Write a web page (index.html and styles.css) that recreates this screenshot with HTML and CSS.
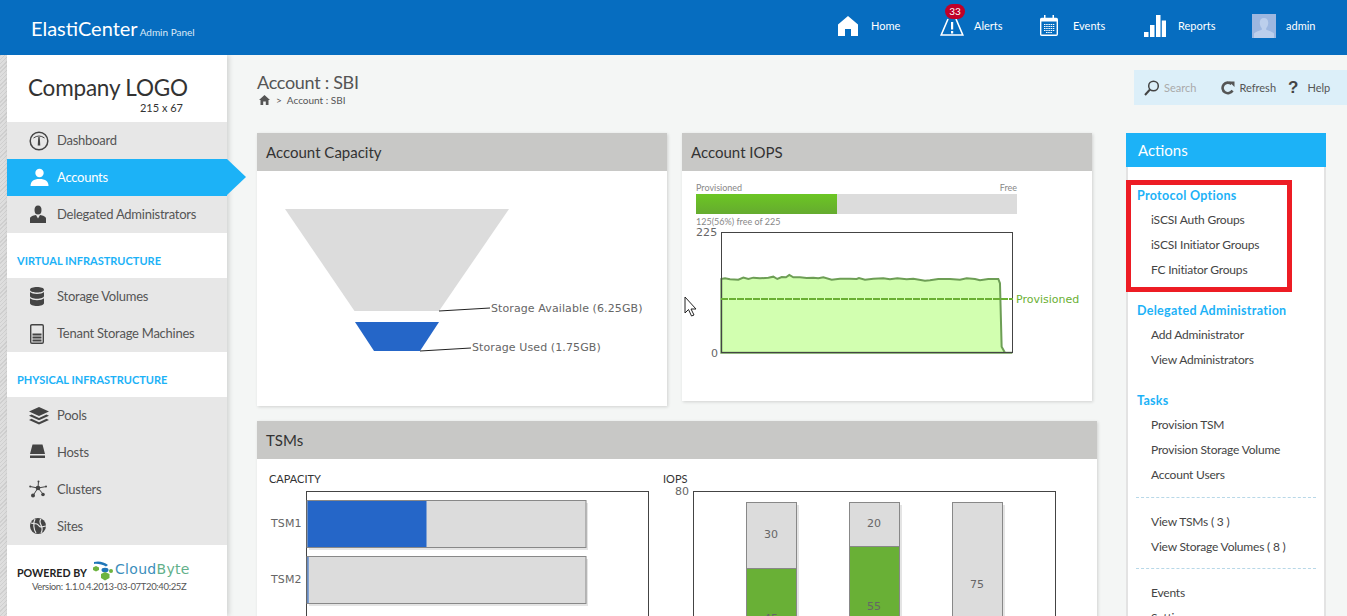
FILE: index.html
```html
<!DOCTYPE html>
<html lang="en">
<head>
    <meta charset="UTF-8">
    <title>ElastiCenter Admin Panel</title>
    <link rel="stylesheet" href="styles.css">
</head>
<body>
    <header class="topbar">
        <div class="brand">ElastiCenter<small>Admin Panel</small></div>
        <nav class="topnav">
            <a class="home-link">
                <svg width="20" height="20" viewBox="0 0 20 20"><path fill="#fff" d="M10 0 20 8.500V20H13V13H7V20H0V8.500Z"/></svg>
                <span>Home</span>
            </a>
            <a class="alerts-link">
                <span class="badge">33</span>
                <svg width="24" height="20" viewBox="0 0 24 20"><path fill="none" stroke="#fff" stroke-width="1.600" d="M8 3 1.200 19H22.800L16 3"/><path fill="#fff" d="M11 6h2.200v7.500H11ZM11 15h2.200v2.600H11Z"/></svg>
                <span>Alerts</span>
            </a>
            <a class="events-link">
                <svg width="18" height="21" viewBox="0 0 18 21"><path fill="none" stroke="#fff" stroke-width="1.400" d="M1.700 3.500H16.300Q17.300 3.500 17.300 4.500V19.300Q17.300 20.300 16.300 20.300H1.700Q.7 20.300 .7 19.300V4.500Q.7 3.500 1.700 3.500Z"/><path fill="#fff" d="M1 3.500H17V6.500H1ZM4 0h1.500v4H4ZM12.500 0H14v4h-1.500Z"/><path stroke="#fff" stroke-width="1.100" stroke-dasharray="1.500 .7" d="M4 9.500h10.500M4 11.500h10.500M4 13.500h10.500M4 15.500h10.500M6 17.500h6.500"/></svg>
                <span>Events</span>
            </a>
            <a class="reports-link">
                <svg width="22" height="22" viewBox="0 0 22 22"><path fill="#fff" d="M0 17h4.500v5H0ZM6 10h4.500v12H6ZM12 0h4.500v22H12ZM17.800 5.500H22V22h-4.200Z"/></svg>
                <span>Reports</span>
            </a>
            <a class="user-link">
                <svg width="24" height="24" viewBox="0 0 24 24"><rect width="24" height="24" fill="#9db7e0"/><path fill="#bccfec" d="M12 4c3 0 4.500 2.400 4.200 5.500-.2 2-1 3.600-2 4.700v1.600c2.500 1 6 1.800 7.800 3.700V24H2v-4.500c1.800-1.900 5.300-2.700 7.800-3.700v-1.600c-1-1.100-1.800-2.700-2-4.700C7.500 6.400 9 4 12 4Z"/></svg>
                <span>admin</span>
            </a>
        </nav>
    </header>

    <div class="layout">
        <div class="hatch"></div>

        <aside class="sidebar">
            <div class="logo">
                <div class="logo-name">Company LOGO</div>
                <div class="logo-size">215 x 67</div>
            </div>
            <ul class="side-menu">
                <li>
                    <svg width="20" height="20" viewBox="0 0 20 20"><circle cx="10" cy="10" r="8.800" fill="none" stroke="#444" stroke-width="1.500"/><path fill="none" stroke="#444" d="M4.500 7Q10 3 15.500 7"/><path fill="#444" d="M9.300 6h1.400l.6 8.500h-2.600Z"/></svg>
                    <span>Dashboard</span>
                </li>
                <li class="active">
                    <svg width="20" height="20" viewBox="0 0 20 20"><circle cx="10.500" cy="5" r="4.200" fill="#fff"/><path fill="#fff" d="M1.500 18c0-4.500 3-7 9-7s9 2.500 9 7Z"/></svg>
                    <span>Accounts</span>
                </li>
                <li>
                    <svg width="20" height="20" viewBox="0 0 20 20"><ellipse cx="9" cy="5" rx="3.500" ry="4.500" fill="#444"/><path fill="#444" d="M1 18v-4.500C1 11.500 4 10.500 7 10l2 3.500L11 10c3 .5 6 1.500 6 3.500V18Z"/></svg>
                    <span>Delegated Administrators</span>
                </li>
            </ul>
            <h3 class="side-heading">VIRTUAL INFRASTRUCTURE</h3>
            <ul class="side-menu">
                <li>
                    <svg width="20" height="20" viewBox="0 0 20 20"><path fill="#444" d="M8 0c3.800 0 7 1 7 2.800S11.800 5.600 8 5.600 1 4.600 1 2.800 4.200 0 8 0ZM1 5c1.200 1.300 4 2 7 2s5.800-.7 7-2v4c0 1.700-3.200 2.700-7 2.700S1 10.700 1 9ZM1 11.200c1.200 1.300 4 2 7 2s5.800-.7 7-2V16c0 1.800-3.200 3-7 3s-7-1.200-7-3Z"/></svg>
                    <span>Storage Volumes</span>
                </li>
                <li>
                    <svg width="20" height="20" viewBox="0 0 20 20"><rect x="1.700" y=".7" width="12.600" height="18.600" rx="1.200" fill="none" stroke="#444" stroke-width="1.400"/><path fill="#444" d="M3.500 9.500h9v2h-9ZM3.500 12.500h9v2h-9ZM3.500 15.500h9v2h-9Z"/></svg>
                    <span>Tenant Storage Machines</span>
                </li>
            </ul>
            <h3 class="side-heading">PHYSICAL INFRASTRUCTURE</h3>
            <ul class="side-menu">
                <li>
                    <svg width="20" height="20" viewBox="0 0 20 20"><path fill="#444" d="M10 1 20 5.500 10 10 0 5.500ZM2.500 8.500 10 12 17.500 8.500 20 9.800 10 14.300 0 9.800ZM2.500 12.800 10 16.300 17.500 12.800 20 14 10 18.500 0 14Z"/></svg>
                    <span>Pools</span>
                </li>
                <li>
                    <svg width="20" height="20" viewBox="0 0 20 20"><path fill="#444" d="M3.500 1.500h10L16 11H1ZM1 12.500h15V15H1Z"/></svg>
                    <span>Hosts</span>
                </li>
                <li>
                    <svg width="20" height="20" viewBox="0 0 20 20"><path stroke="#444" d="M9 8 9.500 1M9 8 1 6.500M9 8 17.500 6.500M9 8 4 15.500M9 8l5 6"/><circle cx="9" cy="8" r="2.300" fill="#444"/><circle cx="4" cy="15.500" r="2" fill="#444"/><circle cx="14" cy="14.500" r="1.800" fill="#444"/><circle cx="1.200" cy="6.500" r="1" fill="#444"/><circle cx="17" cy="6.500" r="1" fill="#444"/><circle cx="9.500" cy="1.500" r="1" fill="#444"/></svg>
                    <span>Clusters</span>
                </li>
                <li>
                    <svg width="20" height="20" viewBox="0 0 20 20"><circle cx="9" cy="9" r="8" fill="#444"/><path fill="none" stroke="#e7e7e7" stroke-width="1.200" d="M6 2C4 6 4.500 12 7 16M12 2c-2 2-1 4 0 6s2 5 0 8M2 6c3 1 4 0 6 1s2 3 4 3 3-1 5-1"/></svg>
                    <span>Sites</span>
                </li>
            </ul>
            <div class="powered">
                <div class="powered-line">
                    <b>POWERED BY</b>
                    <svg class="cb-logo" width="100" height="22" viewBox="0 0 100 22">
                        <path fill="#1f76b8" d="M1 1C6-.5 11 1 15 4l-2 1.500C9 3.500 5 2.500 1 3Z"/>
                        <path fill="#6db33f" d="M0 6.500 3 5l3 1.500V9L3 10.500 0 9Z"/>
                        <ellipse cx="12" cy="9" rx="3.500" ry="2.300" fill="#1f76b8"/>
                        <path fill="#6db33f" d="M8 13l4-2 4.500 2 0 4-4.500 2.500L8 17Z"/>
                        <circle cx="18" cy="10" r="2" fill="#6db33f"/>
                        <text class="cb-cloud" x="22" y="13">Cloud<tspan class="cb-byte">Byte</tspan></text>
                    </svg>
                </div>
                <div class="version">Version: 1.1.0.4.2013-03-07T20:40:25Z</div>
            </div>
        </aside>

        <main class="content">
            <div class="page-head">
                <div class="page-title">
                    <h1>Account : SBI</h1>
                    <div class="crumbs">
                        <svg width="11" height="10" viewBox="0 0 11 10"><path fill="#555" d="M5.500 0 11 5H9.500V10H6.800V6.500H4.200V10H1.500V5H0Z"/></svg>
                        <span class="crumb-sep">&gt;</span>
                        <span>Account : SBI</span>
                    </div>
                </div>
                <div class="toolbar">
                    <svg class="tool-search" width="16" height="16" viewBox="0 0 16 16"><circle cx="9.500" cy="6" r="4.800" fill="none" stroke="#444" stroke-width="1.500"/><path stroke="#444" stroke-width="2" d="M6 9.500 1 15"/></svg>
                    <span class="search-text">Search</span>
                    <svg class="tool-refresh" width="14" height="14" viewBox="0 0 14 14"><path fill="none" stroke="#555" stroke-width="2.600" d="M11.500 9.500A5.300 5.300 0 1 1 10.500 3"/><path fill="#555" d="M8 .5h5.500V6Z"/></svg>
                    <span>Refresh</span>
                    <b class="tool-help">?</b>
                    <span>Help</span>
                </div>
            </div>

            <div class="columns">
                <div class="main-col">
                    <div class="panel-row">
                        <section class="panel panel-capacity">
                            <h2>Account Capacity</h2>
                            <svg class="chart" width="410" height="235" viewBox="0 0 410 235">
                                <path class="c-free" d="M28 38H252L182 140H97.500Z"/>
                                <path class="c-used" d="M98 151H182L163 180H117Z"/>
                                <path class="c-leader" d="M182 140 233 137M163 180 214 177"/>
                                <text class="c-text" x="234" y="141">Storage Available (6.25GB)</text>
                                <text class="c-text" x="215" y="180">Storage Used (1.75GB)</text>
                            </svg>
                        </section>
                        <section class="panel panel-iops">
                            <h2>Account IOPS</h2>
                            <div class="iops-body">
                                <div class="meter-labels"><span>Provisioned</span><span>Free</span></div>
                                <div class="meter"><div class="meter-fill" style="width: 44%"></div></div>
                                <div class="meter-note">125(56%) free of 225</div>
                            </div>
                            <svg class="chart iops-chart" width="410" height="190" viewBox="0 0 410 190">
                                <text class="c-text" x="14" y="5">225</text>
                                <text class="c-text" x="29" y="126">0</text>
                                <g transform="translate(-2 -61) scale(.3333)">
                                    <path class="area" d="M124 327 135 325 150 328 175 329 190 323 205 327 220 323 240 325 265 323 280 320 292 327 305 321 318 322 328 315 340 322 360 322 380 324 400 323 415 325 430 322 455 329 480 326 510 326 530 327 537 324 555 329 580 326 610 325 630 328 652 325 680 328 700 326 735 332 750 331 775 327 810 327 840 329 860 325 885 327 900 331 925 327 955 327 960 340 965 530 975 548 997 548H124Z"/>
                                </g>
                                <rect class="plot" x="39.500" y="1.500" width="291" height="120"/>
                                <path class="c-limit" d="M39 68H331"/>
                                <text class="c-limit-text" x="334" y="72">Provisioned</text>
                                <path class="c-cursor" d="M3 66V82L6.500 78.500 9.500 85 12 84 9 78H14Z"/>
                            </svg>
                        </section>
                    </div>

                    <section class="panel panel-tsm">
                        <h2>TSMs</h2>
                        <svg class="chart" width="840" height="280" viewBox="0 0 840 280">
                            <text class="c-title" x="12" y="24">CAPACITY</text>
                            <text class="c-title" x="406" y="24">IOPS</text>
                            <rect class="plot" x="49.500" y="32.500" width="342" height="240"/>
                            <text class="c-text" x="14" y="68">TSM1</text>
                            <text class="c-text" x="14" y="124">TSM2</text>
                            <rect class="bar-shadow" x="52" y="44" width="279" height="47"/>
                            <rect class="bar-empty" x="50" y="41.500" width="279" height="47"/>
                            <rect class="bar-used" x="50.500" y="42" width="119" height="46"/>
                            <rect class="bar-shadow" x="52" y="100" width="279" height="47"/>
                            <rect class="bar-empty" x="50" y="97.500" width="279" height="47"/>
                            <rect class="bar-used" x="50.500" y="98" width="1" height="46"/>

                            <text class="c-text" x="418" y="36">80</text>
                            <rect class="plot" x="436.500" y="32.500" width="362" height="240"/>
                            <rect class="bar-shadow" x="492" y="46" width="50" height="200"/>
                            <rect class="bar-empty" x="489.500" y="43.500" width="50" height="66"/>
                            <rect class="bar-ok" x="489.500" y="109.500" width="50" height="140"/>
                            <text class="c-text mid" x="514" y="79">30</text>
                            <text class="c-text mid" x="514" y="163">45</text>
                            <rect class="bar-shadow" x="595" y="46" width="50" height="200"/>
                            <rect class="bar-empty" x="592.500" y="43.500" width="50" height="44"/>
                            <rect class="bar-ok" x="592.500" y="87.500" width="50" height="160"/>
                            <text class="c-text mid" x="617" y="68">20</text>
                            <text class="c-text mid" x="617" y="151">55</text>
                            <rect class="bar-shadow" x="698" y="46" width="50" height="200"/>
                            <rect class="bar-empty" x="695.500" y="43.500" width="50" height="200"/>
                            <text class="c-text mid" x="720" y="129">75</text>
                        </svg>
                    </section>
                </div>

                <aside class="actions">
                    <h2>Actions</h2>
                    <div class="actions-body">
                        <div class="highlight">
                            <h4>Protocol Options</h4>
                            <a>iSCSI Auth Groups</a>
                            <a>iSCSI Initiator Groups</a>
                            <a>FC Initiator Groups</a>
                        </div>
                        <div class="action-group">
                            <h4>Delegated Administration</h4>
                            <a>Add Administrator</a>
                            <a>View Administrators</a>
                        </div>
                        <div class="action-group tasks-group">
                            <h4>Tasks</h4>
                            <a>Provision TSM</a>
                            <a>Provision Storage Volume</a>
                            <a>Account Users</a>
                        </div>
                        <div class="action-group ruled">
                            <a>View TSMs ( 3 )</a>
                            <a>View Storage Volumes ( 8 )</a>
                        </div>
                        <div class="action-group ruled">
                            <a>Events</a>
                            <a>Settings</a>
                        </div>
                    </div>
                </aside>
            </div>
        </main>
    </div>
</body>
</html>
```

FILE: styles.css
```css
* {
    box-sizing: border-box;
}
html, body {
    margin: 0;
    height: 616px;
    overflow: hidden;
}
body {
    font-family: Lato, "Noto Sans", sans-serif;
    font-size: 13px;
    color: #444;
    background-color: #f4f6f5;
}
h1, h2, h3, h4, ul {
    margin: 0;
    padding: 0;
    font-weight: normal;
}
ul {
    list-style: none;
}

/* top bar */
.topbar {
    display: flex;
    justify-content: space-between;
    align-items: center;
    height: 55px;
    padding-left: 31px;
    background-color: #066dc0;
    color: white;
}
.brand {
    font-size: 20px;
}
.brand small {
    font-size: 10px;
    margin-left: 2px;
    color: #dbe9f6;
}
.topnav {
    display: flex;
    align-items: center;
    padding-bottom: 4px;
    font-size: 11px;
}
.topnav a {
    position: relative;
    display: flex;
    align-items: center;
}
.home-link {
    width: 102px;
    gap: 13px;
}
.alerts-link {
    width: 100px;
    gap: 10px;
}
.events-link {
    width: 104px;
    gap: 15px;
}
.reports-link {
    width: 108px;
    gap: 12px;
}
.user-link {
    width: 95px;
    gap: 10px;
}
.badge {
    position: absolute;
    left: 5px;
    top: -12px;
    width: 20px;
    height: 15px;
    border-radius: 8px;
    background-color: #c00028;
    font-size: 10px;
    line-height: 15px;
    text-align: center;
}

/* sidebar */
.layout {
    display: flex;
    height: 561px;
    overflow: hidden;
}
.hatch {
    width: 7px;
    background: repeating-linear-gradient(135deg, #cfcfcf 0, #cfcfcf 1px, #dedede 1px, #dedede 3px);
}
.sidebar {
    position: relative;
    z-index: 1;
    width: 220px;
    flex-shrink: 0;
    background-color: white;
    box-shadow: 2px 0 5px rgba(0, 0, 0, 0.15);
}
.logo {
    height: 67px;
    padding: 19px 0 0 21px;
    color: #333;
}
.logo-name {
    font-size: 22.500px;
    letter-spacing: -0.2px;
    line-height: 28px;
}
.logo-size {
    font-size: 11px;
    line-height: 11px;
    margin-right: 44px;
    text-align: right;
}
.side-menu li {
    position: relative;
    display: flex;
    align-items: center;
    height: 37px;
    padding-left: 22px;
    background-color: #e7e7e7;
    color: #555;
}
.side-menu span {
    padding-bottom: 2px;
    letter-spacing: -0.25px;
}
.side-menu svg {
    width: 20px;
    margin-right: 8px;
    flex-shrink: 0;
}
.side-menu .active {
    background-color: #1cb2f7;
    color: white;
}
.side-menu .active::after {
    content: "";
    position: absolute;
    left: 100%;
    top: 0;
    border-left: 19px solid #1cb2f7;
    border-top: 18.500px solid transparent;
    border-bottom: 18.500px solid transparent;
}
.side-heading {
    height: 45px;
    padding: 21px 0 0 10px;
    font-size: 11px;
    font-weight: bold;
    line-height: 14px;
    color: #1cb2f7;
}
.powered {
    padding: 16px 0 0 10px;
}
.powered-line {
    display: flex;
    align-items: center;
    font-size: 10.700px;
    color: #222;
}
.cb-logo {
    margin-left: 6px;
}
.cb-cloud {
    font-family: "DejaVu Sans", sans-serif;
    font-size: 14px;
    letter-spacing: 0.3px;
    fill: #3c8ebc;
}
.cb-byte {
    fill: #62b08a;
}
.version {
    margin-top: -2px;
    padding-left: 15px;
    font-size: 9.500px;
    letter-spacing: -0.35px;
    color: #555;
}

/* main area */
.content {
    flex: 1;
    padding-left: 30px;
}
.page-head {
    display: flex;
    justify-content: space-between;
    height: 78px;
    padding-top: 15px;
}
.page-title h1 {
    font-size: 18px;
    letter-spacing: -0.3px;
    line-height: 24px;
    color: #555;
}
.crumbs {
    display: flex;
    align-items: center;
    padding-left: 2px;
    font-size: 10px;
    color: #555;
}
.crumb-sep {
    margin: 0 5px 0 6px;
}
.toolbar {
    display: flex;
    align-items: center;
    width: 213px;
    height: 35px;
    padding-left: 10px;
    background-color: #dceff9;
    font-size: 11px;
    color: #555;
}
.tool-search {
    margin-right: 4px;
}
.search-text {
    color: #aaa;
}
.tool-refresh {
    margin: 0 4px 0 25px;
}
.tool-help {
    margin: 0 9px 0 12px;
    font-size: 17px;
    font-family: "Liberation Sans", sans-serif;
    color: #444;
}
.columns {
    display: flex;
    gap: 29px;
}
.main-col {
    width: 840px;
}
.panel-row {
    display: flex;
    align-items: flex-start;
    gap: 15px;
    margin-bottom: 15px;
}
.panel {
    background-color: white;
    box-shadow: 1px 1px 3px rgba(0, 0, 0, 0.15);
}
.panel h2 {
    height: 38px;
    padding-left: 9px;
    background-color: #c8c8c6;
    font-size: 15px;
    line-height: 38px;
    color: #333;
}
.panel-capacity {
    width: 410px;
    height: 273px;
}
.panel-iops {
    width: 410px;
    height: 268px;
}
.panel-tsm {
    width: 840px;
    height: 300px;
}
.chart {
    display: block;
}
.iops-body {
    padding: 11px 75px 0 14px;
    font-size: 9px;
    line-height: 12px;
    color: #888;
}
.meter-labels {
    display: flex;
    justify-content: space-between;
}
.meter {
    height: 20px;
    background-color: #dcdcdc;
}
.meter-fill {
    height: 100%;
    background: linear-gradient(#6cc624, #65ab2f);
}
.meter-note {
    margin: 3px 0 4px;
    line-height: 10px;
}
.iops-chart {
    overflow: visible;
}

/* chart parts */
.c-free, .bar-empty {
    fill: #dcdcdc;
}
.c-used, .bar-used {
    fill: #2566c8;
}
.c-leader {
    fill: none;
    stroke: #222;
}
.c-text {
    font-family: "DejaVu Sans", sans-serif;
    font-size: 11px;
    letter-spacing: 0.1px;
    fill: #666;
}
.c-title {
    font-size: 11px;
    fill: #333;
}
.mid {
    text-anchor: middle;
}
.plot {
    fill: none;
    stroke: #444;
}
.area {
    fill: #d2ffb0;
    stroke: #6d9e55;
    stroke-width: 6;
}
.c-limit {
    stroke: #6ab033;
    stroke-width: 2;
    stroke-dasharray: 7 1;
}
.c-limit-text {
    font-family: "DejaVu Sans", sans-serif;
    font-size: 11px;
    fill: #6ab033;
}
.c-cursor {
    fill: white;
    stroke: #222;
}
.bar-empty, .bar-ok {
    stroke: #888;
}
.bar-ok {
    fill: #69b036;
}
.bar-shadow {
    fill: #e4e4e4;
}

/* actions column */
.actions {
    width: 200px;
}
.actions h2 {
    height: 34px;
    padding-left: 12px;
    background-color: #1cb2f7;
    font-size: 15px;
    line-height: 34px;
    color: white;
}
.actions-body {
    height: 480px;
    padding-top: 13px;
    border: solid #e3e3e3;
    border-width: 0 2px;
    background-color: white;
    font-size: 12px;
    color: #444;
}
.actions-body a {
    display: block;
    height: 25px;
    padding-left: 23px;
    letter-spacing: -0.2px;
    line-height: 25px;
}
.actions-body h4 {
    height: 25px;
    padding-left: 9px;
    font-size: 12.500px;
    font-weight: bold;
    letter-spacing: 0.3px;
    line-height: 27px;
    color: #1cb2f7;
}
.highlight {
    width: 166px;
    height: 112px;
    margin: 0 0 5px -2px;
    border: 5px solid #ed1c24;
}
.highlight h4 {
    margin-top: -3.500px;
    padding-left: 6px;
}
.highlight a {
    padding-left: 20px;
}
.action-group {
    margin-bottom: 15px;
}
.tasks-group {
    margin-bottom: 10px;
}
.ruled {
    width: 180px;
    margin-left: 8px;
    margin-bottom: 9px;
    padding-top: 11px;
    border-top: 1px dashed #b8d8e8;
}
.ruled a {
    padding-left: 15px;
}
```
